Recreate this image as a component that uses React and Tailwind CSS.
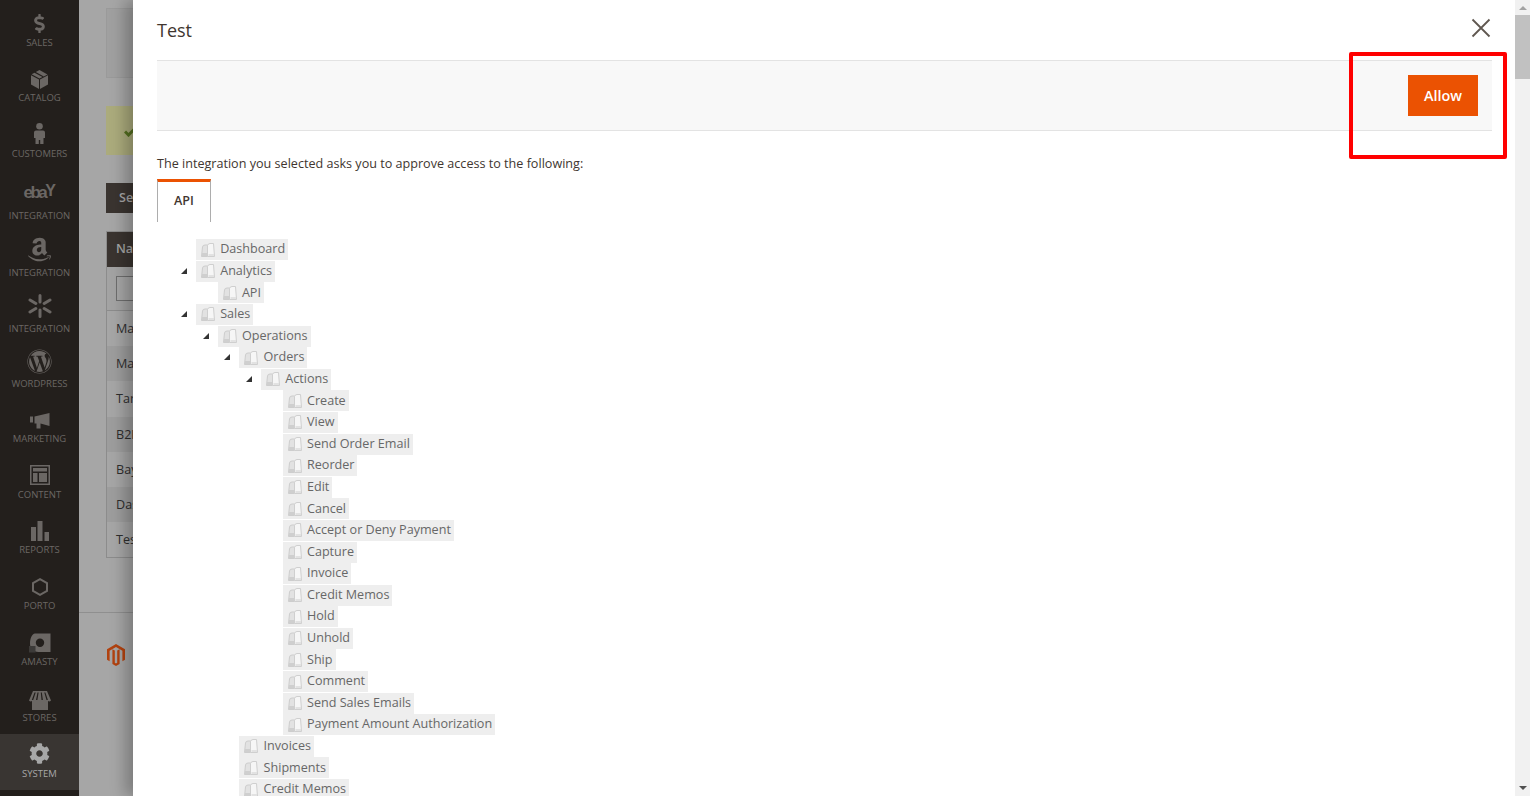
import { FaDollarSign, FaAmazon, FaWordpress, FaCog } from 'react-icons/fa'

const FONT = { fontFamily: '"Open Sans", sans-serif' }

const BoxIcon = () => (
  <svg width="17" height="19" viewBox="0 0 17 19" fill="currentColor">
    <path d="M0 5.200 8 9.500V19L0 14.600z" />
    <path d="M17 5.200 9 9.500V19l8-4.400z" />
    <path d="M8.500 0 4.800 2l8 4.400 3.700-2zM3.500 2.700.6 4.300l7.900 4.300 3-1.600z" />
  </svg>
)

const PersonIcon = () => (
  <svg width="11" height="21" viewBox="0 0 11 21" fill="currentColor">
    <circle cx="5.500" cy="3.300" r="3.300" />
    <path d="M2 7.500h7q2 0 2 2v5.500H9.500V21H6.200v-4H4.800v4H1.500v-6H0V9.500q0-2 2-2z" />
  </svg>
)

const EbayMark = () => (
  <span
    className="text-[17px] leading-none font-bold tracking-[-2.5px] pr-[2px]"
    style={{ fontFamily: '"Liberation Sans", sans-serif' }}
  >
    eba<span className="relative top-[-2px] text-[16px]">Y</span>
  </span>
)

const MegaphoneIcon = () => (
  <svg width="20" height="16" viewBox="0 0 20 16" fill="currentColor">
    <path d="M0 3.500h3V9.500H0zM4.500 3.500 19.500 0v13L10.500 10.500V15.500H6.500V10.500H4.500z" />
  </svg>
)

const ContentIcon = () => (
  <svg width="20" height="20" viewBox="0 0 20 20" fill="currentColor">
    <path fillRule="evenodd" d="M0 0h20v20H0zM1.500 1.500v17h17v-17zM3 3h14v3.500H3zM3 8h4.500v9H3zM9 8h8v9H9z" />
  </svg>
)

const ReportsIcon = () => (
  <svg width="18" height="20" viewBox="0 0 18 20" fill="currentColor">
    <path d="M0 6h5v14H0zM6.500 0h5v20h-5zM13.500 11H18v9h-4.500z" />
  </svg>
)

const SparkIcon = () => (
  <svg width="24" height="24" viewBox="0 0 24 24" stroke="currentColor" strokeWidth="3" strokeLinecap="round">
    <path d="M12 1.500v6.500M12 16v6.500M2 6l5.800 3.500M16.200 14.500 22 18M2 18l5.800-3.500M16.200 9.500 22 6" />
  </svg>
)

const HexIcon = () => (
  <svg width="16" height="18" viewBox="0 0 16 18" fill="none" stroke="currentColor" strokeWidth="2">
    <path d="M8 1.200 15 5.100v7.800L8 16.800 1 12.900V5.100z" />
  </svg>
)

const AmastyIcon = () => (
  <svg width="22" height="20" viewBox="0 0 22 20" fill="currentColor">
    <path fillRule="evenodd" d="M6 .500h15.500V19H9.500C4 19 1 15 1 10.500 1 6 3 .500 6 .500zM11 5.500a4.200 4.200 0 1 0 0 8.400 4.200 4.200 0 0 0 0-8.400z" />
    <path d="M0 13h6.500v6.500H0z" fill="#3c3a38" />
  </svg>
)

const StoresIcon = () => (
  <svg width="22" height="19" viewBox="0 0 22 19" fill="currentColor">
    <path d="M4 0h14l4 9.500q-1.500 1.500-3 .5v9H3v-9q-1.500 1-3-.5zM5.500 1.500 2.800 9h1.400l2.500-7.500zM8.500 1.500 7 9h1.400l1.200-7.500zM11.800 1.500 12.500 9h1.400l-1.100-7.500zM15.300 1.500 17.500 9h1.400l-2.500-7.500z" />
  </svg>
)

const MagentoLogo = () => (
  <svg width="18" height="22" viewBox="0 0 18 22" fill="#b2420f">
    <path d="M9 0 18 5.200v10.600l-2.600 1.500V6.700L9 3 2.600 6.700v10.600L0 15.800V5.200z" />
    <path d="M7.800 6.500v12.300L9 19.500l1.200-.7V6.500l2.400-1.300v14.900L9 22l-3.600-1.900V5.200z" />
  </svg>
)

const TreeIcon = () => (
  <svg width="16" height="16" viewBox="0 0 16 16" className="shrink-0">
    <path d="M1.500 14.500 2.500 5Q2.700 3 5 3h2.500v11.500z" fill="#e2e2e2" stroke="#cdcdcd" strokeWidth="1" />
    <path d="M7.500 14.500V3.500Q8 1.500 10 1.500h3.500l1 13z" fill="#f6f6f6" stroke="#cfcfcf" strokeWidth="1" />
    <path d="M2 11h5v3H2z" fill="#cfcfcf" />
    <path d="M8.500 12h5.500v2H8.500z" fill="#e2e2e2" />
  </svg>
)

const NAV = [
  { label: 'SALES', icon: <FaDollarSign size={19} />, h: 'h-[57px]', gap: 'mt-0' },
  { label: 'CATALOG', icon: <BoxIcon />, h: 'h-[55px]', gap: '-mt-[1px]' },
  { label: 'CUSTOMERS', icon: <PersonIcon />, h: 'h-[56px]', gap: 'mt-[1px]' },
  { label: 'INTEGRATION', icon: <EbayMark />, h: 'h-[62px]', gap: 'mt-[4px]' },
  { label: 'INTEGRATION', icon: <FaAmazon size={27} />, h: 'h-[57px]', gap: 'mt-[4px]' },
  { label: 'INTEGRATION', icon: <SparkIcon />, h: 'h-[56px]', gap: 'mt-[3px]' },
  { label: 'WORDPRESS', icon: <FaWordpress size={25} />, h: 'h-[55px]', gap: 'mt-[3px]' },
  { label: 'MARKETING', icon: <MegaphoneIcon />, h: 'h-[55px]', gap: '-mt-[2px]' },
  { label: 'CONTENT', icon: <ContentIcon />, h: 'h-[56px]', gap: 'mt-0' },
  { label: 'REPORTS', icon: <ReportsIcon />, h: 'h-[55px]', gap: '-mt-[1px]' },
  { label: 'PORTO', icon: <HexIcon />, h: 'h-[56px]', gap: '-mt-[1px]' },
  { label: 'AMASTY', icon: <AmastyIcon />, h: 'h-[56px]', gap: '-mt-[1px]' },
  { label: 'STORES', icon: <StoresIcon />, h: 'h-[58px]', gap: '-mt-[2px]', pb: 'pb-[9px]' },
  { label: 'SYSTEM', icon: <FaCog size={21} />, h: 'h-[56px]', gap: 'mt-[1px]', pb: 'pb-[9px]', active: true },
]

const ROWS = [
  { name: 'Ma', h: 'h-[35px]', bg: 'bg-[#a6a6a6]' },
  { name: 'Ma', h: 'h-[35px]', bg: 'bg-[#9d9d9d]' },
  { name: 'Tar', h: 'h-[36px]', bg: 'bg-[#a6a6a6]' },
  { name: 'B2B', h: 'h-[35px]', bg: 'bg-[#9d9d9d]' },
  { name: 'Bay', h: 'h-[35px]', bg: 'bg-[#a6a6a6]' },
  { name: 'Das', h: 'h-[35px]', bg: 'bg-[#9d9d9d]' },
  { name: 'Tes', h: 'h-[35px]', bg: 'bg-[#a6a6a6]' },
]

const TREE = [
  ['Dashboard', 0],
  ['Analytics', 0, true],
  ['API', 1],
  ['Sales', 0, true],
  ['Operations', 1, true],
  ['Orders', 2, true],
  ['Actions', 3, true],
  ['Create', 4],
  ['View', 4],
  ['Send Order Email', 4],
  ['Reorder', 4],
  ['Edit', 4],
  ['Cancel', 4],
  ['Accept or Deny Payment', 4],
  ['Capture', 4],
  ['Invoice', 4],
  ['Credit Memos', 4],
  ['Hold', 4],
  ['Unhold', 4],
  ['Ship', 4],
  ['Comment', 4],
  ['Send Sales Emails', 4],
  ['Payment Amount Authorization', 4],
  ['Invoices', 2],
  ['Shipments', 2],
  ['Credit Memos', 2],
]

function TreeRow({ label, depth, open }) {
  return (
    <div className="flex h-[21.6px] items-center" style={{ paddingLeft: depth * 21.7 }}>
      <div className="relative flex h-[21px] items-center bg-[#eeeeee] pl-[4px] pr-[3px]">
        {open && (
          <span className="absolute left-[-15px] top-[7px] h-0 w-0 border-b-[6px] border-l-[6px] border-b-[#333333] border-l-transparent" />
        )}
        <TreeIcon />
        <span className="ml-[4.2px] text-[12.6px] leading-none whitespace-nowrap text-[#676767]">{label}</span>
      </div>
    </div>
  )
}

export default function App() {
  return (
    <div className="relative flex h-[796px] w-full overflow-hidden bg-[#a6a6a6]" style={FONT}>
      {/* Sidebar */}
      <div className="flex w-[79px] shrink-0 flex-col bg-[#231f1c]">
        {NAV.map((item, i) => (
          <div
            key={i}
            className={`flex ${item.h} flex-col items-center justify-end ${item.pb || 'pb-[7px]'} ${item.active ? 'bg-[#393532] text-[#a7a7a7]' : 'text-[#6b6764]'}`}
          >
            <div className="flex h-[26px] items-center justify-center">{item.icon}</div>
            <div className={`${item.gap} text-[9.5px] leading-[14px] whitespace-nowrap`}>{item.label}</div>
          </div>
        ))}
      </div>

      {/* Page behind the modal */}
      <div className="flex flex-1 flex-col">
        <div className="px-[27px] pt-[8px]">
          <div className="h-[70px] border border-[#9a9a9a] bg-[#a0a0a0]" />
          <div className="mt-[28px] flex h-[49px] items-center bg-[#abab7c] pl-[18px]">
            <svg width="12" height="10" viewBox="0 0 12 10" fill="none" stroke="#55701f" strokeWidth="3" className="mt-[3px]">
              <path d="M1 4.500 4.500 8 11 1.500" />
            </svg>
          </div>
          <div className="mt-[28px] flex h-[30px] w-[60px] items-center bg-[#3a3430] pl-[13px] pt-[1px] text-[12.6px] font-semibold text-[#a5a5a5]">Se</div>
          <div className="mt-[18px] border border-[#8c8c8c]">
            <div className="flex h-[35px] items-center bg-[#3a3430] pl-[9px] text-[12.6px] font-semibold text-[#a5a5a5]">Na</div>
            <div className="flex h-[44px] items-center border-b border-[#8c8c8c] bg-[#a3a3a3] pl-[9px]">
              <div className="h-[25px] w-[40px] border border-[#6e6e6e] bg-[#a6a6a6]" />
            </div>
            {ROWS.map((row, i) => (
              <div key={i} className={`flex ${row.h} items-center ${row.bg} pl-[9px] pt-[1px] text-[12.6px] text-[#2e2e2e]`}>{row.name}</div>
            ))}
          </div>
        </div>
        <div className="mt-[54px] flex flex-1 items-start border-t border-[#8f8f8f] pl-[28px] pt-[31px]">
          <MagentoLogo />
        </div>
      </div>

      {/* Scrollbar */}
      <div className="z-20 flex w-[15px] shrink-0 flex-col items-center bg-[#f1f1f1]">
        <span className="mt-[6px] h-0 w-0 border-x-[4px] border-b-[4px] border-x-transparent border-b-[#a3a3a3]" />
        <div className="mt-[5px] h-[64px] w-full bg-[#c1c1c1]" />
        <span className="mt-auto mb-[6px] h-0 w-0 border-x-[4px] border-t-[4px] border-x-transparent border-t-[#505050]" />
      </div>

      {/* Modal */}
      <div className="absolute bottom-0 left-[133px] right-[15px] top-0 z-10 bg-white pl-[24px] pr-[23px] shadow-[-8px_0_14px_rgba(0,0,0,0.25)]">
        <div className="flex h-[60px] items-center justify-between">
          <h1 className="text-[18px] text-[#41362f]">Test</h1>
          <svg width="20" height="20" viewBox="0 0 20 20" stroke="#5f5750" strokeWidth="1.800" className="mr-[1px] mb-[5px]">
            <path d="M1.500 1.500 18.500 18.500M18.500 1.500 1.500 18.500" />
          </svg>
        </div>
        <div className="flex h-[71px] items-center justify-end border-y border-[#e3e3e3] bg-[#f8f8f8] pr-[14px]">
          <button className="h-[41px] w-[70px] bg-[#eb5202] text-[14.4px] font-semibold text-white">Allow</button>
        </div>
        <p className="mt-[24px] text-[12.6px] leading-[18px] text-[#41362f]">The integration you selected asks you to approve access to the following:</p>
        <div className="mt-[6px] flex h-[43px] w-[54px] items-start justify-center border-x border-[#adadad] border-t-[3px] border-t-[#eb5202] pt-[10px] text-[12.6px] font-semibold text-[#41362f]">API</div>
        <div className="mt-[16.9px] pl-[39px]">
          {TREE.map(([label, depth, open], i) => (
            <TreeRow key={i} label={label} depth={depth} open={open} />
          ))}
        </div>
      </div>

      {/* Red highlight box */}
      <div className="absolute left-[1349px] top-[52px] z-20 h-[107px] w-[158px] rounded-[2px] border-[4px] border-[#ff0000]" />
    </div>
  )
}
